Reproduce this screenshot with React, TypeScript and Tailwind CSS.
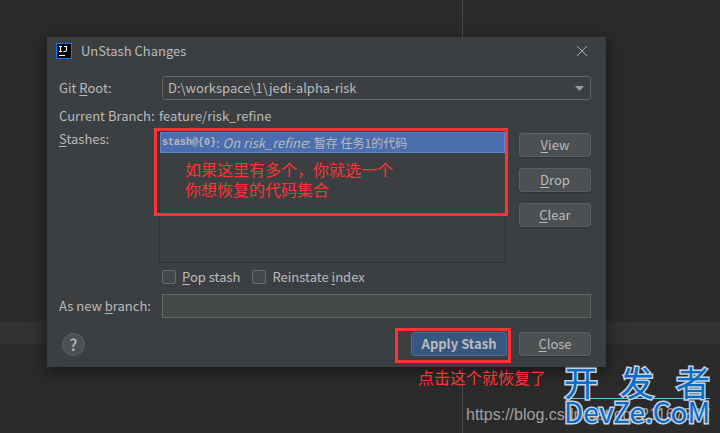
import { useState } from "react";

const roots = ["D:\\workspace\\1\\jedi-alpha-risk"];

const stashes = [{ id: 0, branch: "risk_refine", message: "暂存 任务1的代码" }];

const sideButtons = [
  { key: "V", rest: "iew" },
  { key: "D", rest: "rop" },
  { key: "C", rest: "lear" },
];

const buttonClass =
  "h-6 w-[72px] rounded-[3px] border border-[#5e6060] bg-[#4c5052] shadow-[0_1px_1px_rgba(0,0,0,0.2)]";
const checkboxClass =
  "size-[14px] appearance-none rounded-[2px] border border-[#6b6b6b] bg-[#43494a] checked:bg-[#4b6eaf]";

function Mnemonic({ children }: { children: string }) {
  return <span className="underline underline-offset-2">{children}</span>;
}

function IdeaLogo() {
  return (
    <svg width="16" height="16" viewBox="0 0 16 16" aria-hidden="true">
      <rect width="16" height="16" fill="#087cfa" />
      <rect x="1" y="1" width="14" height="14" fill="#000" />
      <path
        d="M3 3.5h3M4.5 3.5v5M3 8.5h3M8 3.5h2.5v3.8q0 1.2-1.2 1.2H7.4"
        fill="none"
        stroke="#fff"
        strokeWidth="1.2"
      />
      <path d="M3 12.5h6" stroke="#fff" strokeWidth="1" />
    </svg>
  );
}

function UnstashDialog() {
  const [branch, setBranch] = useState("");
  const [selected, setSelected] = useState(0);

  return (
    <section
      role="dialog"
      aria-label="UnStash Changes"
      className="relative bg-[#3c3f41] pr-[15px] pb-[11px] pl-3 shadow-[0_4px_16px_rgba(0,0,0,0.5)]"
    >
      <header className="-ml-[3px] flex h-7 items-center">
        <IdeaLogo />
        <h1 className="ml-[9px] grow">UnStash Changes</h1>
        <button type="button" aria-label="Close dialog" className="mr-1 text-[#afb1b3]">
          <svg width="10" height="10" viewBox="0 0 10 10" stroke="currentColor">
            <path d="M0 0l10 10M10 0L0 10" />
          </svg>
        </button>
      </header>

      <div className="mt-[11px] flex items-center">
        <label htmlFor="root" className="w-[103px]">
          Git <Mnemonic>R</Mnemonic>oot:
        </label>
        <div className="relative grow">
          <select
            id="root"
            className="block h-6 w-full appearance-none rounded-[3px] border border-[#646464] bg-[#3c3f41] px-[5px]"
          >
            {roots.map((root) => (
              <option key={root}>{root}</option>
            ))}
          </select>
          <svg
            className="pointer-events-none absolute top-[10px] right-[7px]"
            width="9"
            height="5"
            viewBox="0 0 9 5"
            fill="#9a9da0"
          >
            <path d="M0 0h9L4.5 5z" />
          </svg>
        </div>
      </div>

      <div className="mt-[6px] flex h-5 items-center">
        <span className="w-[100px]">Current Branch:</span>
        <span>feature/risk_refine</span>
      </div>

      <div className="mt-[5px] flex items-start">
        <span id="stashes" className="w-[100px] leading-4">
          <Mnemonic>S</Mnemonic>tashes:
        </span>
        <div className="relative grow">
          <ul
            role="listbox"
            aria-labelledby="stashes"
            className="h-[132px] border border-[#323232]"
          >
            {stashes.map((stash) => (
              <li
                key={stash.id}
                role="option"
                aria-selected={selected === stash.id}
                onClick={() => setSelected(stash.id)}
                className="flex h-[21px] items-center border border-[#5c84c9] bg-[#4b6eaf] px-px whitespace-pre"
              >
                <b className="font-['Liberation_Mono','DejaVu_Sans_Mono',monospace] text-[10px]">
                  stash@{`{${stash.id}}`}
                </b>
                : <i>On {stash.branch}</i>: <span className="text-[12px]">{stash.message}</span>
              </li>
            ))}
          </ul>
          <div className="pointer-events-none absolute -top-[3px] -right-[2px] -left-[5px] h-[88px] border-3 border-[#ff3333]">
            <p className="pt-7 pl-7 text-[16px] leading-5 text-[#ff3333]">
              如果这里有多个，你就选一个
              <br />
              你想恢复的代码集合
            </p>
          </div>
        </div>
        <div className="mt-[2px] ml-[13px] flex flex-col gap-[11px]">
          {sideButtons.map((button) => (
            <button key={button.key} type="button" className={buttonClass}>
              <Mnemonic>{button.key}</Mnemonic>
              {button.rest}
            </button>
          ))}
        </div>
      </div>

      <div className="mt-1 ml-[103px] flex h-5 items-center gap-3">
        <label className="flex items-center gap-[6px]">
          <input type="checkbox" className={checkboxClass} />
          <span>
            <Mnemonic>P</Mnemonic>op stash
          </span>
        </label>
        <label className="flex items-center gap-[6px]">
          <input type="checkbox" className={checkboxClass} />
          <span>
            Reinstate <Mnemonic>i</Mnemonic>ndex
          </span>
        </label>
      </div>

      <div className="mt-[7px] flex items-center">
        <label htmlFor="branch" className="w-[103px]">
          As new <Mnemonic>b</Mnemonic>ranch:
        </label>
        <input
          id="branch"
          value={branch}
          onChange={(e) => setBranch(e.target.value)}
          className="h-6 grow border border-[#646464] bg-[#45494a] px-[5px]"
        />
      </div>

      <footer className="mt-[14px] flex items-center">
        <button
          type="button"
          aria-label="Help"
          className="ml-[3px] size-[23px] rounded-full border border-[#5e6060] bg-[#4c5052] text-[16px] leading-5 font-medium"
        >
          ?
        </button>
        <div className="relative ml-auto">
          <button
            type="button"
            className="h-6 w-24 rounded-[3px] border border-[#4c708c] bg-[#365880] font-bold"
          >
            Apply Stash
          </button>
          <div className="pointer-events-none absolute -top-1 -right-1 -bottom-[7px] -left-4 border-3 border-[#ff3333]" />
        </div>
        <button type="button" className={`${buttonClass} ml-3`}>
          <Mnemonic>C</Mnemonic>lose
        </button>
      </footer>
    </section>
  );
}

function Watermark() {
  return (
    <div className="absolute right-[10px] bottom-[10px] w-[146px] text-[#0a6cc4] [paint-order:stroke] [-webkit-text-stroke:3px_#c4d4e4]">
      <div className="flex justify-between border-b border-[#5cc8f5] text-[34px] leading-8">
        <span>开</span>
        <span>发</span>
        <span>者</span>
      </div>
      <div className="text-[28px] leading-6">DevZe.CoM</div>
    </div>
  );
}

export default function App() {
  return (
    <main className="relative min-h-screen bg-[#2b2b2b] pt-[37px] pr-[114px] pl-[47px] font-['Noto_Sans_CJK_SC',sans-serif] text-[13px] leading-5 text-[#bbbbbb]">
      <div className="absolute inset-y-0 left-[462px] w-px bg-[#4a4a4a]" />
      <div className="absolute inset-x-0 top-[321px] h-[23px] bg-[#323232]" />
      <UnstashDialog />
      <p className="relative ml-[371px] text-[16px] text-[#ff3333]">点击这个就恢复了</p>
      <a
        href="https://blog.csdn.net/qq_21167527"
        className="relative mt-[18px] ml-[419px] block font-['Liberation_Sans',sans-serif] text-[16px] whitespace-nowrap text-[#a0a0a0]"
      >
        https://blog.csdn.net/qq_21167527
      </a>
      <Watermark />
    </main>
  );
}
